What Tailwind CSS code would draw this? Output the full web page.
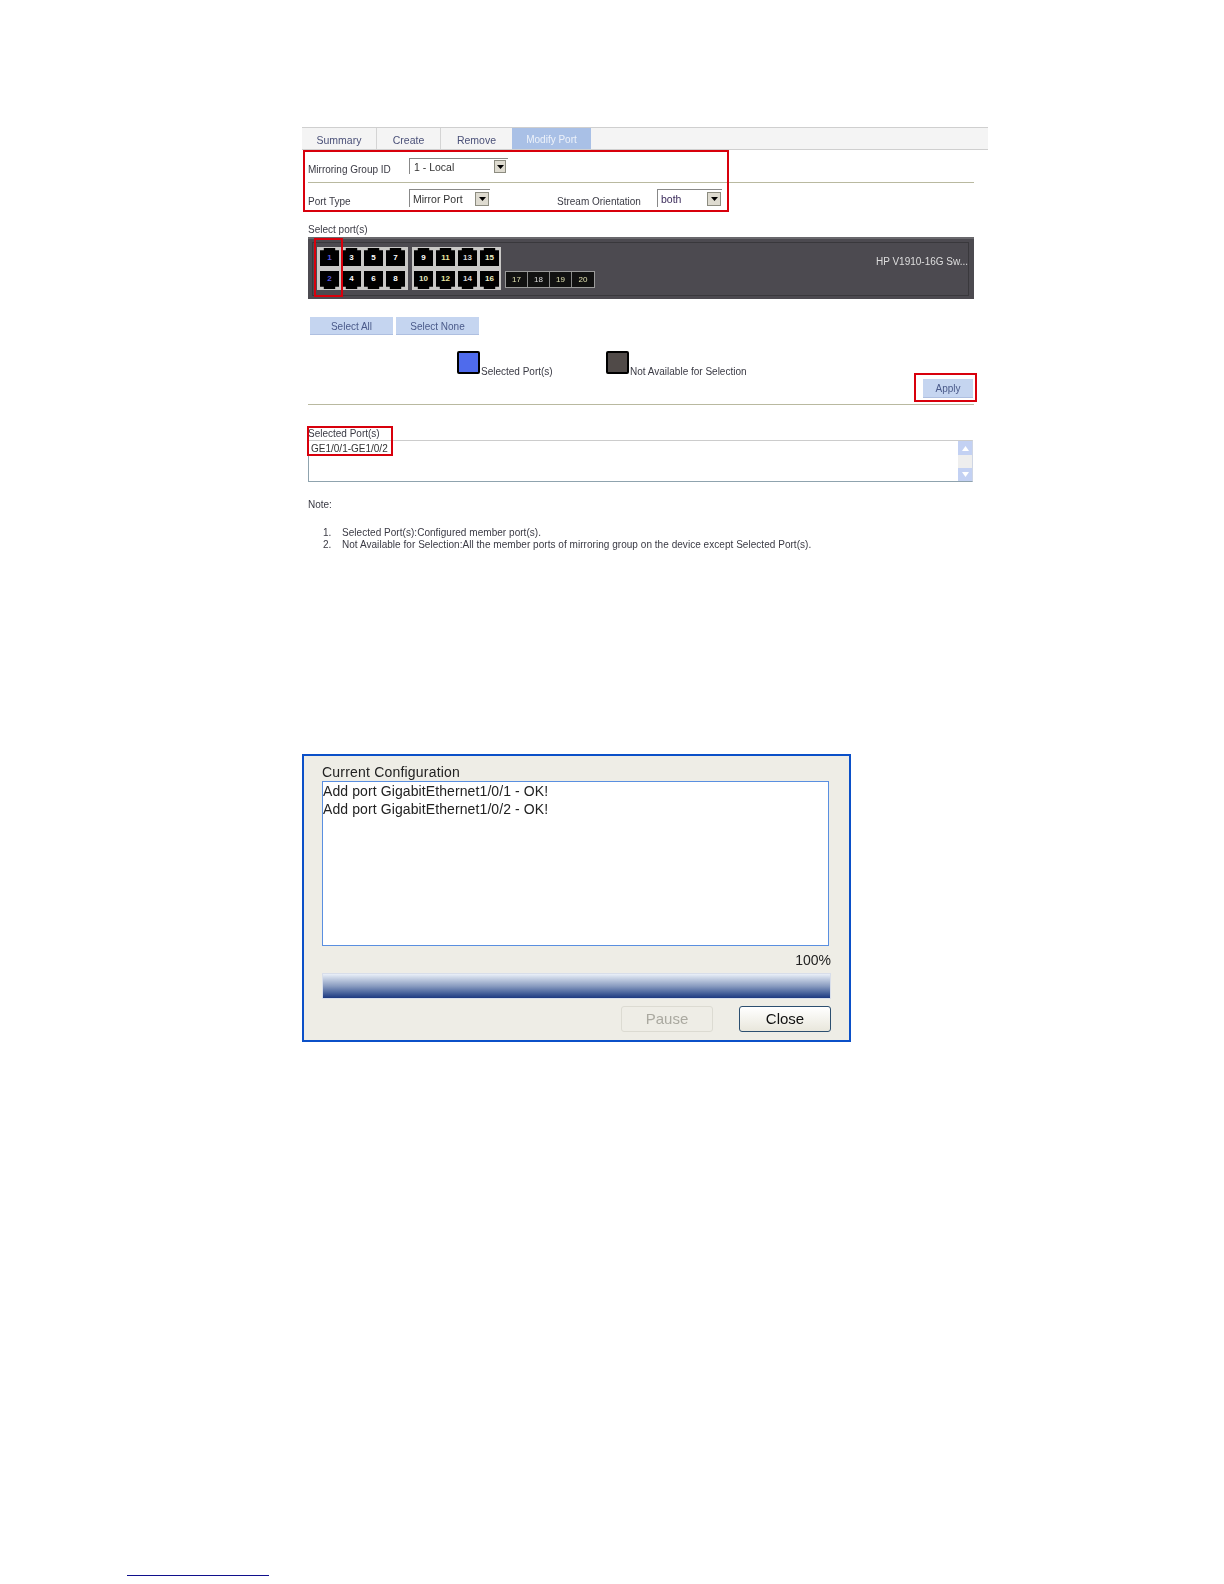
<!doctype html>
<html>
<head>
<meta charset="utf-8">
<script src="https://cdn.jsdelivr.net/npm/@tailwindcss/browser@4"></script>
</head>
<body class="bg-white font-['Liberation_Sans',Arial,sans-serif] w-[1224px] h-[1584px] overflow-hidden relative">

<main class="ml-[302px] pt-[127px]">
  <section class="relative w-[686px] text-[10px] leading-[12px] text-[#3a3a44] blur-[0.35px]">
    <!-- tabs -->
    <div class="flex h-[23px] border-y border-[#cfcfcf] bg-[#f4f4f4] text-[#4a5078] text-[10.5px]">
      <div class="w-[75px] pt-[2px] flex items-center justify-center border-r border-[#d4d4d4]">Summary</div>
      <div class="w-[64px] pt-[2px] flex items-center justify-center border-r border-[#d4d4d4]">Create</div>
      <div class="w-[71px] pt-[2px] flex items-center justify-center">Remove</div>
      <div class="w-[79px] pt-[2px] flex items-center justify-center bg-[#a9c0e6] text-[#eef2fa] text-[10px]">Modify Port</div>
    </div>

    <div class="pl-[6px] w-[672px]">
      <!-- row 1 -->
      <div class="flex items-start h-[32px]">
        <div class="w-[101px] mt-[14px]">Mirroring Group ID</div>
        <div class="mt-[8px] w-[99px] h-[16px] flex items-center justify-between bg-white border-l border-t border-[#888] pl-[4px] pr-[2px] text-[10.5px] text-[#333]">
          <span>1 - Local</span>
          <div class="w-[12px] h-[13px] bg-[#dedbd0] border border-[#8c8c80] flex items-center justify-center"><svg width="7" height="4" viewBox="0 0 7 4"><polygon points="0,0 7,0 3.5,4" fill="#000"/></svg></div>
        </div>
      </div>
      <div class="h-px bg-[#b9b9a0]"></div>
      <!-- row 2 -->
      <div class="flex items-start h-[41px]">
        <div class="w-[101px] mt-[13px]">Port Type</div>
        <div class="mt-[6px] w-[81px] h-[18px] flex items-center justify-between bg-white border-l border-t border-[#888] pl-[3px] pr-[1px] text-[10.5px] text-[#333]">
          <span>Mirror Port</span>
          <div class="w-[14px] h-[14px] bg-[#dedbd0] border border-[#8c8c80] flex items-center justify-center"><svg width="7" height="4" viewBox="0 0 7 4"><polygon points="0,0 7,0 3.5,4" fill="#000"/></svg></div>
        </div>
        <div class="ml-[67px] w-[100px] mt-[13px]">Stream Orientation</div>
        <div class="mt-[6px] w-[65px] h-[18px] flex items-center justify-between bg-white border-l border-t border-[#888] pl-[3px] pr-[1px] text-[10.5px] text-[#3a2a5a]">
          <span>both</span>
          <div class="w-[14px] h-[14px] bg-[#dedbd0] border border-[#8c8c80] flex items-center justify-center"><svg width="7" height="4" viewBox="0 0 7 4"><polygon points="0,0 7,0 3.5,4" fill="#000"/></svg></div>
        </div>
      </div>
      <!-- select ports label -->
      <div class="h-[13px] leading-[12px]">Select port(s)</div>

      <!-- switch panel -->
      <div class="h-[62px] w-[666px] bg-[#4c4a50] border-t-2 border-[#69686c] pt-[3px] pb-[3px] pl-[4px] pr-[5px]">
        <div class="h-[54px] border border-[#39383c] flex items-start pl-[4px] pt-[4px]">
          <!-- group 1 -->
          <div class="w-[91px] h-[43px] bg-[#c9c8c6] pl-[3px] pt-[1px] grid grid-cols-[repeat(4,19px)] gap-x-[3px] gap-y-[4px] text-[8px] leading-none text-white font-bold">
            <div class="h-[18px] bg-black pt-[2px] flex items-center justify-center text-[#5a5ae0] [clip-path:polygon(20%_0,80%_0,80%_12%,100%_12%,100%_100%,0_100%,0_12%,20%_12%)]">1</div>
            <div class="h-[18px] bg-black pt-[2px] flex items-center justify-center [clip-path:polygon(20%_0,80%_0,80%_12%,100%_12%,100%_100%,0_100%,0_12%,20%_12%)]">3</div>
            <div class="h-[18px] bg-black pt-[2px] flex items-center justify-center [clip-path:polygon(20%_0,80%_0,80%_12%,100%_12%,100%_100%,0_100%,0_12%,20%_12%)]">5</div>
            <div class="h-[18px] bg-black pt-[2px] flex items-center justify-center [clip-path:polygon(20%_0,80%_0,80%_12%,100%_12%,100%_100%,0_100%,0_12%,20%_12%)]">7</div>
            <div class="h-[18px] bg-black pb-[2px] flex items-center justify-center text-[#5a5ae0] [clip-path:polygon(0_0,100%_0,100%_88%,80%_88%,80%_100%,20%_100%,20%_88%,0_88%)]">2</div>
            <div class="h-[18px] bg-black pb-[2px] flex items-center justify-center [clip-path:polygon(0_0,100%_0,100%_88%,80%_88%,80%_100%,20%_100%,20%_88%,0_88%)]">4</div>
            <div class="h-[18px] bg-black pb-[2px] flex items-center justify-center [clip-path:polygon(0_0,100%_0,100%_88%,80%_88%,80%_100%,20%_100%,20%_88%,0_88%)]">6</div>
            <div class="h-[18px] bg-black pb-[2px] flex items-center justify-center [clip-path:polygon(0_0,100%_0,100%_88%,80%_88%,80%_100%,20%_100%,20%_88%,0_88%)]">8</div>
          </div>
          <!-- group 2 -->
          <div class="ml-[4px] w-[89px] h-[43px] bg-[#c9c8c6] pl-[2px] pt-[1px] grid grid-cols-[repeat(4,19px)] gap-x-[3px] gap-y-[4px] text-[8px] leading-none text-white font-bold">
            <div class="h-[18px] bg-black pt-[2px] flex items-center justify-center [clip-path:polygon(20%_0,80%_0,80%_12%,100%_12%,100%_100%,0_100%,0_12%,20%_12%)]">9</div>
            <div class="h-[18px] bg-black pt-[2px] flex items-center justify-center text-[#e8e8a0] [clip-path:polygon(20%_0,80%_0,80%_12%,100%_12%,100%_100%,0_100%,0_12%,20%_12%)]">11</div>
            <div class="h-[18px] bg-black pt-[2px] flex items-center justify-center text-[#d8d8d8] [clip-path:polygon(20%_0,80%_0,80%_12%,100%_12%,100%_100%,0_100%,0_12%,20%_12%)]">13</div>
            <div class="h-[18px] bg-black pt-[2px] flex items-center justify-center text-[#f0f0c8] [clip-path:polygon(20%_0,80%_0,80%_12%,100%_12%,100%_100%,0_100%,0_12%,20%_12%)]">15</div>
            <div class="h-[18px] bg-black pb-[2px] flex items-center justify-center text-[#e8e8c0] [clip-path:polygon(0_0,100%_0,100%_88%,80%_88%,80%_100%,20%_100%,20%_88%,0_88%)]">10</div>
            <div class="h-[18px] bg-black pb-[2px] flex items-center justify-center text-[#e8e8a0] [clip-path:polygon(0_0,100%_0,100%_88%,80%_88%,80%_100%,20%_100%,20%_88%,0_88%)]">12</div>
            <div class="h-[18px] bg-black pb-[2px] flex items-center justify-center text-[#d8d8d8] [clip-path:polygon(0_0,100%_0,100%_88%,80%_88%,80%_100%,20%_100%,20%_88%,0_88%)]">14</div>
            <div class="h-[18px] bg-black pb-[2px] flex items-center justify-center text-[#f0f0c8] [clip-path:polygon(0_0,100%_0,100%_88%,80%_88%,80%_100%,20%_100%,20%_88%,0_88%)]">16</div>
          </div>
          <!-- SFP -->
          <div class="ml-[4px] mt-[24px] flex border border-[#9a9a9a] text-[8px] leading-none text-[#e0e0b0]">
            <div class="w-[22px] h-[15px] bg-[#111] border-r border-[#8a8a8a] flex items-center justify-center">17</div>
            <div class="w-[22px] h-[15px] bg-[#111] border-r border-[#8a8a8a] flex items-center justify-center text-[#ddd]">18</div>
            <div class="w-[22px] h-[15px] bg-[#111] border-r border-[#8a8a8a] flex items-center justify-center">19</div>
            <div class="w-[22px] h-[15px] bg-[#111] flex items-center justify-center">20</div>
          </div>
          <div class="ml-auto mr-0 mt-[9px] text-[10px] text-[#dedede]">HP V1910-16G Sw...</div>
        </div>
      </div>

      <!-- select buttons -->
      <div class="flex gap-[3px] mt-[18px] ml-[2px] text-[#4a5a8a]">
        <div class="w-[83px] h-[18px] pt-[2px] flex items-center justify-center bg-[#c5d5f0] border-b border-[#aebfe0]">Select All</div>
        <div class="w-[83px] h-[18px] pt-[2px] flex items-center justify-center bg-[#c5d5f0] border-b border-[#aebfe0]">Select None</div>
      </div>

      <!-- legend -->
      <div class="flex items-end h-[23px] mt-[16px] ml-[149px]">
        <div class="w-[23px] h-[23px] bg-[#4f6bec] border-2 border-black rounded-[2px]"></div>
        <div class="w-[126px] pl-px -mb-[4px]">Selected Port(s)</div>
        <div class="w-[23px] h-[23px] bg-[#504a48] border-2 border-black rounded-[2px]"></div>
        <div class="pl-px -mb-[4px]">Not Available for Selection</div>
      </div>

      <!-- apply -->
      <div class="flex justify-end mt-[5px] pr-[1px]">
        <div class="w-[50px] h-[19px] pt-[2px] flex items-center justify-center bg-[#c5d5f0] border-b border-[#aebfe0] text-[#4a5a8a]">Apply</div>
      </div>
      <div class="h-px bg-[#b9b9a0] mt-[6px]"></div>

      <!-- selected ports -->
      <div class="mt-[23px] h-[12px]">Selected Port(s)</div>
      <div class="flex justify-between w-[665px] h-[42px] border border-t-[#cccccc] border-l-[#8fa3ae] border-b-[#8fa3ae] border-r-[#cfd6e4] text-[#333]">
        <div class="pl-[2px] pt-[2px]">GE1/0/1-GE1/0/2</div>
        <div class="w-[14px] flex flex-col justify-between bg-[#eeeeee]">
          <div class="h-[14px] bg-[#c3d1f3] flex items-center justify-center"><svg width="7" height="5" viewBox="0 0 7 5"><polygon points="0,5 7,5 3.5,0" fill="#fff"/></svg></div>
          <div class="h-[13px] bg-[#c3d1f3] flex items-center justify-center"><svg width="7" height="5" viewBox="0 0 7 5"><polygon points="0,0 7,0 3.5,5" fill="#fff"/></svg></div>
        </div>
      </div>

      <!-- notes -->
      <div class="mt-[17px]">Note:</div>
      <div class="mt-[16px] flex tracking-[0.04px]"><span class="w-[34px] pl-[15px]">1.</span><span>Selected Port(s):Configured member port(s).</span></div>
      <div class="flex tracking-[0.04px]"><span class="w-[34px] pl-[15px]">2.</span><span>Not Available for Selection:All the member ports of mirroring group on the device except Selected Port(s).</span></div>
    </div>

    <!-- red callouts -->
    <div class="absolute left-px top-[23px] w-[426px] h-[62px] border-2 border-[#d8000c]"></div>
    <div class="absolute left-[12px] top-[111px] w-[29px] h-[59px] border-2 border-[#d8000c]"></div>
    <div class="absolute left-[612px] top-[246px] w-[63px] h-[29px] border-2 border-[#d8000c]"></div>
    <div class="absolute left-[5px] top-[299px] w-[86px] h-[30px] border-2 border-[#d8000c]"></div>
  </section>

  <!-- dialog -->
  <section class="mt-[203px] w-[549px] h-[288px] border-2 border-[#0b50c8] bg-[#eeede6] pl-[18px] text-[14px] text-[#222] blur-[0.35px]">
    <div class="mt-[8px] h-[16px] leading-[16px] tracking-[0.2px]">Current Configuration</div>
    <div class="mt-px w-[507px] h-[165px] bg-white border border-[#5a8fe0] pt-px leading-[17.5px] tracking-[0.1px]">
      <div>Add port GigabitEthernet1/0/1 - OK!</div>
      <div>Add port GigabitEthernet1/0/2 - OK!</div>
    </div>
    <div class="mt-[6px] w-[509px] h-[16px] leading-[16px] text-right">100%</div>
    <div class="mt-[5px] w-[509px] h-[26px] border border-[#d8deea] bg-gradient-to-b from-[#eaf0f8] via-[#8a9cc0] to-[#1c3880]"></div>
    <div class="mt-[7px] w-[509px] flex justify-end gap-[26px] text-[15px]">
      <div class="w-[92px] h-[26px] flex items-center justify-center border border-[#dcdbd2] rounded-[3px] text-[#aaa9a0]">Pause</div>
      <div class="w-[92px] h-[26px] flex items-center justify-center border border-[#2c4f70] rounded-[3px] bg-gradient-to-b from-white to-[#e9e7dc] text-[#111]">Close</div>
    </div>
  </section>

  <!-- footnote rule -->
  <div class="mt-[533px] -ml-[175px] w-[142px] h-px bg-[#10108c]"></div>
</main>
</body>
</html>
